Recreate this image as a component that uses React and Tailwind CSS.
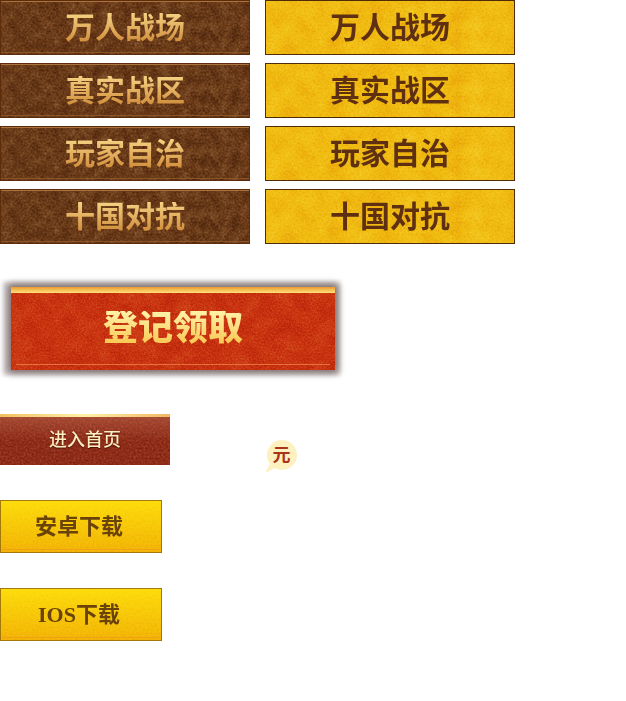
import React from "react";

const CJK = "font-['Liberation_Serif','Noto_Sans_CJK_SC',sans-serif]";

function Grain({ id, freq, opacity }) {
  return (
    <svg className="absolute inset-0 h-full w-full mix-blend-soft-light" style={{ opacity }} aria-hidden="true">
      <filter id={id} x="0" y="0" width="100%" height="100%" colorInterpolationFilters="sRGB">
        <feTurbulence type="fractalNoise" baseFrequency={freq} numOctaves="4" seed="7" />
        <feColorMatrix type="matrix" values="1.5 0 0 0 -0.25  1.5 0 0 0 -0.25  1.5 0 0 0 -0.25  0 0 0 0 1" />
      </filter>
      <rect width="100%" height="100%" filter={`url(#${id})`} />
    </svg>
  );
}

function Brown({ label, i }) {
  return (
    <div className="relative flex h-[55px] w-[250px] items-center justify-center overflow-hidden border border-[#5e2c0c] bg-[#693917]">
      <Grain id={`b${i}`} freq="0.5" opacity="0.4" />
      <Grain id={`bl${i}`} freq="0.1" opacity="0.3" />
      <div className="absolute inset-x-0 top-0 h-px bg-[#a9743c]" />
      <div className="absolute inset-x-0 bottom-px h-px bg-[#8a5526]" />
      <span className={`relative bg-gradient-to-b from-[#f5d283] to-[#cf8c38] bg-clip-text text-[30px] font-bold leading-none text-transparent ${CJK}`}>
        {label}
      </span>
    </div>
  );
}

function Gold({ label, i }) {
  return (
    <div className="relative flex h-[55px] w-[250px] items-center justify-center overflow-hidden border border-[#4f2b08] bg-[#f0bb10]">
      <Grain id={`g${i}`} freq="0.5" opacity="0.35" />
      <Grain id={`gl${i}`} freq="0.05" opacity="0.3" />
      <span className={`relative text-[30px] font-bold leading-none text-[#5f2f12] ${CJK}`}>{label}</span>
    </div>
  );
}

function Download({ label, i }) {
  return (
    <div className="relative flex h-[53px] w-[162px] items-center justify-center overflow-hidden border border-[#a37a0a] bg-gradient-to-b from-[#fcdc0c] to-[#f2b406] pr-1">
      <Grain id={`d${i}`} freq="0.5" opacity="0.25" />
      <div className="absolute inset-x-0 bottom-0.5 h-px bg-[#f3a019]" />
      <span className={`relative text-[22px] font-bold leading-none text-[#6a430a] ${CJK}`}>{label}</span>
    </div>
  );
}

export default function App() {
  const labels = ["万人战场", "真实战区", "玩家自治", "十国对抗"];
  return (
    <div className="h-[701px] w-[626px] overflow-hidden bg-white">
      <div className="grid w-[515px] grid-cols-[250px_250px] gap-x-[15px] gap-y-2">
        {labels.map((l, i) => (
          <React.Fragment key={l}>
            <Brown label={l} i={i} />
            <Gold label={l} i={i} />
          </React.Fragment>
        ))}
      </div>

      <div className="mt-[35px] h-[99px] w-[343px] bg-[#d4cece] pl-[11px] pt-2 shadow-[inset_0_0_4px_3px_#fff]">
        <div className="relative flex h-[83px] w-[324px] items-center justify-center overflow-hidden bg-[#c9320f] shadow-[0_0_7px_3px_#7a6a6a]">
          <Grain id="big" freq="0.6" opacity="0.4" />
          <Grain id="bigl" freq="0.06" opacity="0.2" />
          <div className="absolute inset-x-0 top-0 h-1.5 bg-gradient-to-b from-[#eb9a2c] to-[#ffe27a]" />
          <div className="absolute inset-x-[5px] bottom-[5px] h-px bg-[#e8703a]" />
          <span className={`relative bg-gradient-to-b from-[#fff3a8] to-[#f8c548] bg-clip-text text-[35px] font-black leading-none text-transparent ${CJK}`}>
            登记领取
          </span>
        </div>
      </div>

      <div className="mt-9 flex h-[51px] items-start">
        <div className="relative flex h-[51px] w-[170px] items-center justify-center overflow-hidden bg-[#8f2c18]">
          <Grain id="enter" freq="0.5" opacity="0.4" />
          <div className="absolute inset-x-0 top-0 h-[3px] bg-gradient-to-r from-[#f0c060] via-[#fff0a8] to-[#f0b860]" />
          <div className="absolute inset-x-0 top-[3px] h-6 bg-gradient-to-b from-[#c06a50]/50 to-transparent" />
          <span className={`relative text-lg font-medium leading-none text-[#fdeec0] [text-shadow:0_1px_1px_#4a1006] ${CJK}`}>进入首页</span>
        </div>
        <div className="relative ml-[95px] mt-6 flex h-[33px] w-[33px] items-center justify-center">
          <div className="flex h-[30px] w-[30px] items-center justify-center rounded-full bg-[#fdf1bf]">
            <span className={`text-lg font-bold leading-none text-[#a8341c] ${CJK}`}>元</span>
          </div>
          <svg className="absolute bottom-[-2px] left-0 h-2.5 w-2.5" viewBox="0 0 10 10" aria-hidden="true">
            <path d="M0 10 L5 1 L10 5 Z" fill="#fdf1bf" />
          </svg>
        </div>
      </div>

      <div className="mt-[35px] flex flex-col gap-[35px]">
        <Download label="安卓下载" i={0} />
        <Download label="IOS下载" i={1} />
      </div>
    </div>
  );
}
